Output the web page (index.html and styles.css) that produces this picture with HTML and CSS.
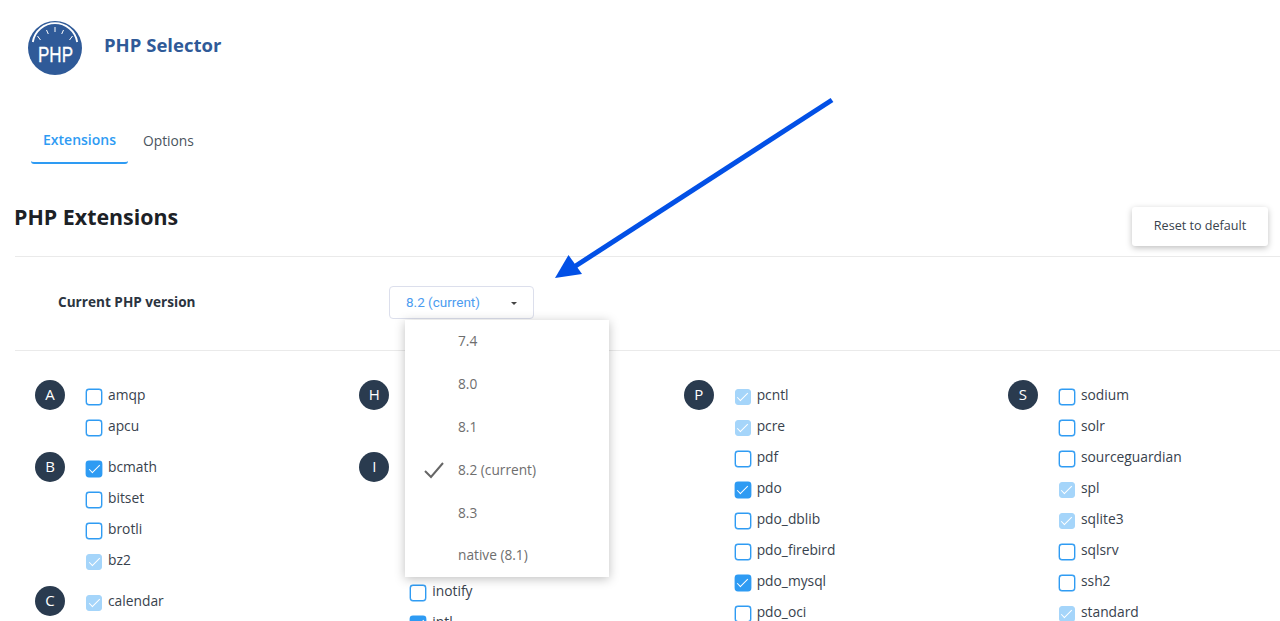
FILE: index.html
```html
<!DOCTYPE html>
<html lang="en">
<head>
  <title>PHP Selector</title>
  <meta charset="UTF-8">
  <link rel="stylesheet" href="styles.css">
</head>
<body>
  <div class="app-header">
    <svg class="logo" viewBox="0 0 54 54" width="54" height="54">
      <circle cx="27" cy="27" r="27" fill="#2f5a98"/>
      <path d="M4.800 21 A22.500 22.500 0 0 1 49.200 21" fill="none" stroke="#fff" stroke-width="1.800"/>
      <path d="M9.500 15 L12.500 19 M18.500 9 L20.300 13 M27 6 L27 11 M35.500 9 L33.700 13 M44.500 15 L41.500 19" stroke="#fff" stroke-width="1"/>
      <text class="logo-text" x="10" y="40.500" textLength="35" lengthAdjust="spacingAndGlyphs">PHP</text>
    </svg>
    <h1>PHP Selector</h1>
  </div>

  <div class="tabs">
    <a class="tab active">Extensions</a>
    <a class="tab">Options</a>
  </div>

  <div class="section-head">
    <h2>PHP Extensions</h2>
    <button class="reset-button">Reset to default</button>
  </div>

  <div class="version-row">
    <div class="version-label">Current PHP version</div>
    <div class="version-select">
      <button class="select-button"><span>8.2 (current)</span><i class="caret"></i></button>
      <ul class="select-menu">
        <li>7.4</li>
        <li>8.0</li>
        <li>8.1</li>
        <li>
          <svg class="menu-check" viewBox="0 0 20 18" width="20" height="18"><path d="M1 10 L7 16 L19 2" fill="none" stroke="#666" stroke-width="2"/></svg>
          8.2 (current)
        </li>
        <li>8.3</li>
        <li>native (8.1)</li>
      </ul>
    </div>
  </div>

  <div class="ext-grid">
    <div class="ext-column">
      <div class="ext-group">
        <div class="letter">A</div>
        <div class="ext-list">
          <label class="ext"><i class="box"></i>amqp</label>
          <label class="ext"><i class="box"></i>apcu</label>
        </div>
      </div>
      <div class="ext-group">
        <div class="letter">B</div>
        <div class="ext-list">
          <label class="ext"><i class="box on"></i>bcmath</label>
          <label class="ext"><i class="box"></i>bitset</label>
          <label class="ext"><i class="box"></i>brotli</label>
          <label class="ext"><i class="box on light"></i>bz2</label>
        </div>
      </div>
      <div class="ext-group">
        <div class="letter">C</div>
        <div class="ext-list">
          <label class="ext"><i class="box on light"></i>calendar</label>
        </div>
      </div>
    </div>

    <div class="ext-column">
      <div class="ext-group">
        <div class="letter">H</div>
        <div class="ext-list">
          <label class="ext"><i class="box"></i></label>
          <label class="ext"><i class="box"></i></label>
        </div>
      </div>
      <div class="ext-group">
        <div class="letter">I</div>
        <div class="ext-list">
          <label class="ext"><i class="box"></i></label>
          <label class="ext"><i class="box"></i></label>
          <label class="ext"><i class="box"></i></label>
          <label class="ext"><i class="box"></i></label>
          <label class="ext"><i class="box"></i>inotify</label>
          <label class="ext"><i class="box on"></i>intl</label>
        </div>
      </div>
    </div>

    <div class="ext-column">
      <div class="ext-group">
        <div class="letter">P</div>
        <div class="ext-list">
          <label class="ext"><i class="box on light"></i>pcntl</label>
          <label class="ext"><i class="box on light"></i>pcre</label>
          <label class="ext"><i class="box"></i>pdf</label>
          <label class="ext"><i class="box on"></i>pdo</label>
          <label class="ext"><i class="box"></i>pdo_dblib</label>
          <label class="ext"><i class="box"></i>pdo_firebird</label>
          <label class="ext"><i class="box on"></i>pdo_mysql</label>
          <label class="ext"><i class="box"></i>pdo_oci</label>
        </div>
      </div>
    </div>

    <div class="ext-column">
      <div class="ext-group">
        <div class="letter">S</div>
        <div class="ext-list">
          <label class="ext"><i class="box"></i>sodium</label>
          <label class="ext"><i class="box"></i>solr</label>
          <label class="ext"><i class="box"></i>sourceguardian</label>
          <label class="ext"><i class="box on light"></i>spl</label>
          <label class="ext"><i class="box on light"></i>sqlite3</label>
          <label class="ext"><i class="box"></i>sqlsrv</label>
          <label class="ext"><i class="box"></i>ssh2</label>
          <label class="ext"><i class="box on light"></i>standard</label>
        </div>
      </div>
    </div>
  </div>

  <!-- annotation drawn over the screenshot -->
  <svg class="annotation" viewBox="0 0 1280 621" width="1280" height="621">
    <path d="M832 100 L574 267" stroke="#0250e6" stroke-width="5" fill="none"/>
    <polygon points="555,278 568.500,255 582,274" fill="#0250e6"/>
  </svg>
</body>
</html>
```

FILE: styles.css
```css
:root {
  --title-color: #2f5a98;
  --blue: #2e9bf3;
  --blue-light: #a5d5fa;
  --dark: #2a3b4f;
  --text-color: #38424d;
  --line: #eaeaea;
}
html, body {
  height: 100%;
  overflow: hidden;
}
body {
  position: relative;
  margin: 0;
  background: #fff;
  font-family: "Open Sans", sans-serif;
  color: var(--text-color);
}
.app-header {
  display: flex;
  align-items: center;
  gap: 22px;
  padding: 21px 0 0 28px;
}
.logo {
  display: block;
}
.logo-text {
  font-family: "Liberation Sans", sans-serif;
  font-size: 22px;
  fill: #fff;
  stroke: #fff;
  stroke-width: 0.300px;
}
h1 {
  margin: 0 0 8px;
  font-size: 18.500px;
  font-weight: 700;
  color: var(--title-color);
}
.tabs {
  display: flex;
  gap: 3px;
  margin: 44px 0 0 31px;
}
.tab {
  padding: 12px 12px 11px;
  font-size: 13.800px;
  line-height: 20px;
  color: #4a545e;
}
.tab.active {
  padding: 11px 12px 12px;
  font-size: 14px;
  font-weight: 600;
  color: var(--blue);
  border-bottom: 2px solid var(--blue);
  border-radius: 0 0 3px 3px;
}
.section-head {
  display: flex;
  justify-content: space-between;
  align-items: flex-end;
  margin: 39px 0 0 15px;
  padding: 0 12px 10px 0;
  border-bottom: 1px solid var(--line);
}
h2 {
  margin: 0 0 16px -1px;
  font-size: 21.400px;
  line-height: 27px;
  font-weight: 700;
  color: #1c2126;
}
.reset-button {
  width: 136px;
  height: 39px;
  padding: 0 0 2px;
  border: none;
  border-radius: 3px;
  background: #fff;
  box-shadow: 0 2px 6px rgba(0,0,0,0.25);
  font-family: "Open Sans", sans-serif;
  font-size: 12.600px;
  color: var(--text-color);
}
.version-row {
  display: flex;
  align-items: center;
  margin-left: 15px;
  padding: 29px 0 31px 43px;
  border-bottom: 1px solid var(--line);
}
.version-label {
  width: 331px;
  padding-bottom: 2px;
  font-size: 13.600px;
  font-weight: 700;
  color: #2b3440;
}
.version-select {
  position: relative;
}
.select-button {
  display: flex;
  justify-content: space-between;
  align-items: center;
  width: 145px;
  height: 33px;
  padding: 0 16px 2px;
  border: 1px solid #dcdfec;
  border-radius: 4px;
  background: #fff;
  font-family: Roboto, sans-serif;
  font-size: 13.500px;
  color: #4c9cf0;
}
.caret {
  margin-top: 4px;
  border-top: 3px solid #444;
  border-left: 3px solid transparent;
  border-right: 3px solid transparent;
}
.select-menu {
  position: absolute;
  top: 34px;
  left: 16px;
  z-index: 2;
  width: 204px;
  height: 257px;
  display: grid;
  grid-auto-rows: 1fr;
  margin: 0;
  padding: 0;
  list-style: none;
  background: #fff;
  box-shadow: 0 2px 10px rgba(0,0,0,0.25);
  font-size: 13.700px;
  color: #6e6e6e;
}
.select-menu li {
  position: relative;
  display: flex;
  align-items: center;
  padding: 0 0 1.400px 53px;
}
.menu-check {
  position: absolute;
  left: 19px;
  top: 13px;
}
.ext-grid {
  display: grid;
  grid-template-columns: repeat(4, 324.330px);
  padding: 29px 0 0 35px;
}
.ext-group {
  display: flex;
  gap: 21px;
  margin-bottom: 10px;
}
.letter {
  flex: none;
  width: 30px;
  height: 30px;
  border-radius: 50%;
  background: var(--dark);
  color: #fff;
  font-size: 15px;
  font-weight: 500;
  line-height: 29px;
  text-align: center;
}
.ext {
  box-sizing: border-box;
  display: flex;
  align-items: center;
  gap: 6px;
  height: 31px;
  padding-bottom: 2px;
  font-size: 13.800px;
  color: var(--text-color);
}
.box {
  box-sizing: border-box;
  position: relative;
  flex: none;
  width: 16px;
  height: 16px;
  margin-top: 4px;
  border: 1px solid var(--blue);
  border-radius: 3px;
  background: #fff;
  box-shadow: 0 0 0 0.400px var(--blue);
}
.box.on {
  background: var(--blue);
}
.box.on.light {
  border-color: var(--blue-light);
  background: var(--blue-light);
  box-shadow: none;
}
.box.on::after {
  content: "";
  position: absolute;
  left: 4.500px;
  top: 0;
  width: 4px;
  height: 10px;
  border: solid #fff;
  border-width: 0 1.500px 1.500px 0;
  transform: rotate(45deg);
}
.annotation {
  position: absolute;
  left: 0;
  top: 0;
  z-index: 3;
  pointer-events: none;
}
```
